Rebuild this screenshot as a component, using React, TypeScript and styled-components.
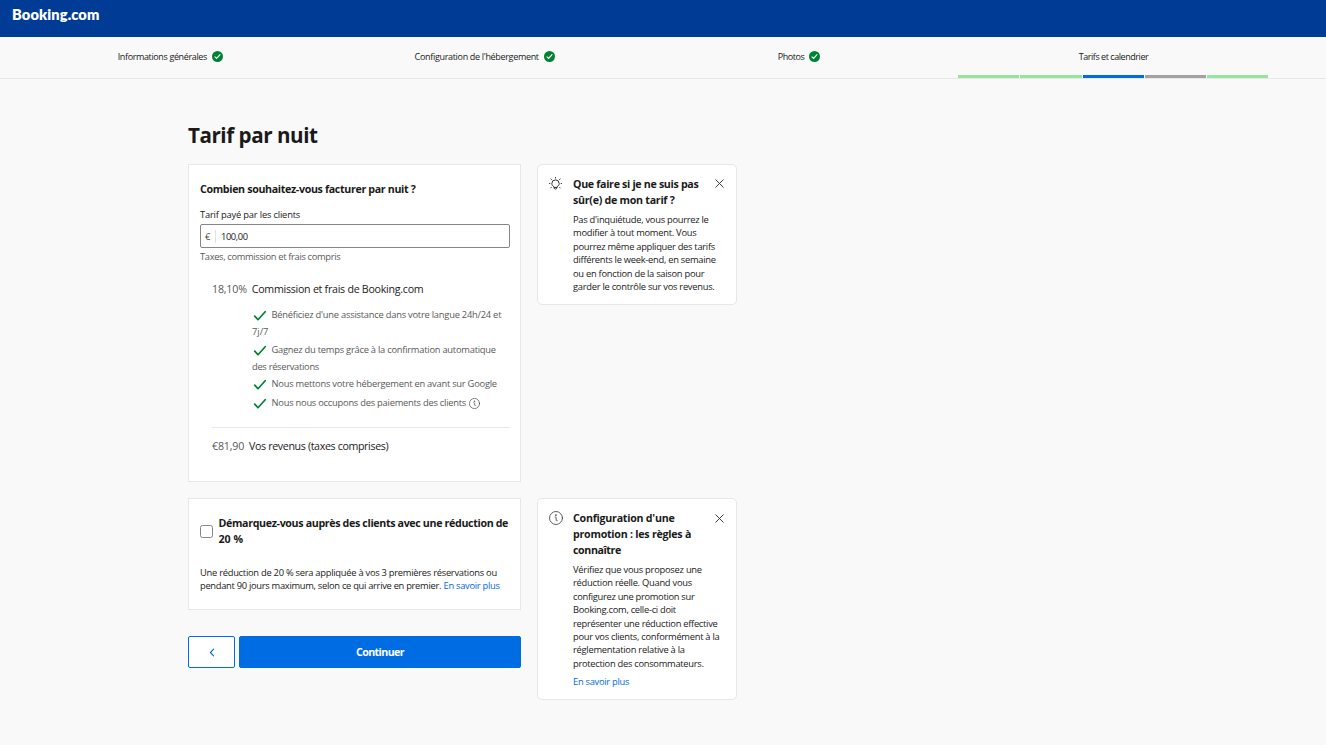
import React from "react";
import styled, { createGlobalStyle } from "styled-components";

const GlobalStyle = createGlobalStyle`
  * { box-sizing: border-box; }
  body {
    margin: 0;
    background: #f9f9f9;
    color: #1a1a1a;
    font-family: "Open Sans", "Noto Sans", sans-serif;
    font-size: 9.33px;
    line-height: 13.4px;
  }
  h1, h2, h3, p, ul { margin: 0; padding: 0; }
`;

const Page = styled.div`
  min-height: 745px;
`;

const TopBar = styled.header`
  height: 37px;
  padding: 6px 12px;
  background: #003b95;
`;

const Logo = styled.div`
  color: #fff;
  font: 800 14.6px/18px Lato, sans-serif;
  letter-spacing: 0.12px;
`;

const Steps = styled.nav`
  display: grid;
  grid-template-columns: repeat(4, 310px);
  column-gap: 4.4px;
  height: 42px;
  padding-left: 15px;
  border-bottom: 1px solid #e7e7e7;
`;

const Step = styled.div`
  display: flex;
  flex-direction: column;
  justify-content: space-between;
`;

const StepLabel = styled.div`
  display: flex;
  align-items: center;
  justify-content: center;
  gap: 5px;
  height: 39px;
  padding-left: 0.6px;
  font-size: 9px;
`;

const Progress = styled.div`
  display: grid;
  grid-template-columns: repeat(5, 1fr);
  gap: 1px;
  flex-shrink: 0;
  margin-top: -1px;
`;

const Segment = styled.span<{ $color: string }>`
  height: 3px;
  background: ${(p) => p.$color};
`;

/* One line of copy; $track tunes its letter spacing. */
const Line = styled.span<{ $track?: number }>`
  display: block;
  white-space: nowrap;
  letter-spacing: ${(p) => p.$track ?? 0}px;
`;

const Inline = styled(Line)`
  display: inline-block;
`;

const Main = styled.main`
  width: 549px;
  margin-left: 188px;
  padding-top: 42px;
`;

const Title = styled.h1`
  height: 43px;
  font-size: 20.6px;
  line-height: 28px;
  font-weight: 700;
`;

const Row = styled.section`
  display: grid;
  grid-template-columns: 333px 200px;
  column-gap: 16px;
  align-items: start;
  margin-bottom: 16px;
`;

const Card = styled.div<{ $height: number }>`
  height: ${(p) => p.$height}px;
  padding: 16px 10px 0 11px;
  background: #fff;
  border: 1px solid #e7e7e7;
`;

const Heading = styled.h2`
  font-size: 10.67px;
  line-height: 16px;
  font-weight: 700;
`;

const FieldLabel = styled.label`
  display: block;
  margin-top: 11px;
  font-weight: 500;
  color: #1a1a1a;
`;

const Field = styled.div`
  display: flex;
  align-items: center;
  height: 24px;
  margin-top: 3px;
  border: 1px solid #868686;
  border-radius: 2px;
`;

const Currency = styled.span`
  width: 15px;
  padding-left: 4px;
  border-right: 1px solid #e0e0e0;
  color: #474747;
`;

const Amount = styled.input`
  width: 200px;
  padding: 0 0 0 5px;
  border: 0;
  outline: 0;
  background: transparent;
  color: #1a1a1a;
  font: inherit;
  letter-spacing: -0.4px;
`;

const Hint = styled.p`
  margin-top: 2px;
  color: #595959;
`;

const Breakdown = styled.div`
  margin: 17px 0 0 12px;
`;

const BreakdownRow = styled.div`
  display: flex;
  gap: 5px;
  font-size: 10.67px;
  line-height: 16px;
`;

const Value = styled.span`
  color: #595959;
`;

const Benefits = styled.ul`
  display: flex;
  flex-direction: column;
  margin: 9px 0 15px 40px;
  list-style: none;
  color: #595959;
`;

const Benefit = styled.li<{ $height: number }>`
  height: ${(p) => p.$height}px;
  line-height: 16px;
`;

const BenefitLine = styled.div`
  display: flex;
  align-items: center;
  height: 18px;
  & > svg:first-child { margin: 2px 5px 0 0.5px; }
  & > svg:last-child { margin: 2px 0 0 3px; }
`;

const Divider = styled.hr`
  height: 1px;
  margin: 0 0 10px;
  border: 0;
  background: #e7e7e7;
`;

const Tip = styled.aside<{ $height: number }>`
  display: grid;
  grid-template-columns: 24px 1fr 12px;
  height: ${(p) => p.$height}px;
  padding: 11px 11px 0;
  background: #fff;
  border: 1px solid #e7e7e7;
  border-radius: 5px;
`;

const TipBody = styled.div`
  min-width: 0;
`;

const TipText = styled.p`
  margin-top: 5px;
`;

const IconSlot = styled.div<{ $drop?: number }>`
  height: 16px;
  padding-top: ${(p) => p.$drop ?? 0}px;
  svg { display: block; }
`;

const CloseButton = styled.button<{ $drop?: number }>`
  display: flex;
  height: 16px;
  padding: ${(p) => 3 + (p.$drop ?? 0)}px 0 0 2px;
  border: 0;
  background: none;
`;

const Link = styled.a`
  color: #006ce4;
  text-decoration: none;
`;

const TipLink = styled(Link)`
  display: block;
  margin-top: 5px;
`;

const CheckRow = styled.label`
  display: flex;
  align-items: center;
  gap: 5.5px;
`;

const Checkbox = styled.input`
  appearance: none;
  flex: none;
  width: 13px;
  height: 13px;
  margin: 1px 0 0;
  border: 1px solid #868686;
  border-radius: 2.5px;
  background: #fff;
`;

const PromoText = styled.p`
  margin-top: 19px;
`;

const Actions = styled.div`
  display: grid;
  grid-template-columns: 47px 1fr;
  gap: 4px;
  height: 32px;
  margin-top: 26px;
`;

const Button = styled.button<{ $primary?: boolean }>`
  display: flex;
  align-items: center;
  justify-content: center;
  padding: 0;
  border: 1px solid #006ce4;
  border-radius: 2px;
  background: ${(p) => (p.$primary ? "#006ce4" : "#fff")};
  color: ${(p) => (p.$primary ? "#fff" : "#006ce4")};
  font: 700 10.67px/16px "Open Sans", sans-serif;
`;

const DoneIcon = () => (
  <svg width="11" height="11" viewBox="0 0 11 11">
    <circle cx="5.5" cy="5.5" r="5.5" fill="#008234" />
    <path d="M3 5.9 4.6 7.4 8 3.7" fill="none" stroke="#fff" strokeWidth="1.1" strokeLinecap="round" />
  </svg>
);

const CheckIcon = () => (
  <svg width="14" height="13" viewBox="0 0 14 13" fill="none" stroke="#008234" strokeWidth="1.7" strokeLinecap="round" strokeLinejoin="round">
    <path d="M1.7 7.2 5 10.7 12.2 2.7" />
  </svg>
);

const InfoIcon = ({ size }: { size: number }) => (
  <svg width={size} height={size} viewBox="0 0 24 24" fill="none" stroke="#474747" strokeWidth="1.5" strokeLinecap="round">
    <circle cx="12" cy="12" r="11.1" />
    <path d="M10.4 10.4h1.1c.5 0 .8.3.8.8v4.4c0 .6.4 1 1 1h.7" />
    <circle cx="11.7" cy="7" r=".6" fill="#474747" />
  </svg>
);

const BulbIcon = () => (
  <svg width="13" height="15" viewBox="0 0 13 15" fill="none" stroke="#333" strokeWidth="1" strokeLinecap="round">
    <path d="M4.9 11.1V10.6C3.5 10 2.8 8.9 2.8 7.6a3.7 3.7 0 0 1 7.4 0c0 1.3-.7 2.4-2.1 3V11.1ZM5 12.2C5.3 13.5 7.7 13.5 8 12.2" />
    <path d="M6.5 2V1.5M2.4 3.5l-.6-.6M10.6 3.5l.6-.6M.9 7.5H.5M12.1 7.5h.4M2.3 11.4l-.5.5M10.7 11.4l.5.5" />
  </svg>
);

const CloseIcon = () => (
  <svg width="9" height="9" viewBox="0 0 9 9" stroke="#333" strokeWidth="0.95" strokeLinecap="round">
    <path d="M.8.8 8.2 8.2M8.2.8.8 8.2" />
  </svg>
);

const BackIcon = () => (
  <svg width="6" height="9" viewBox="0 0 6 9" fill="none" stroke="#006ce4" strokeWidth="1.1" strokeLinecap="round" strokeLinejoin="round">
    <path d="M4.6 1.2 1.4 4.5 4.6 7.8" />
  </svg>
);

type Copy = [string, number];

const steps: Copy[] = [
  ["Informations générales", -0.37],
  ["Configuration de l'hébergement", -0.32],
  ["Photos", -0.42],
];

const segments = ["#97e59c", "#97e59c", "#006ce4", "#a2a2a2", "#97e59c"];

const benefits: { height: number; lines: Copy[]; info?: boolean }[] = [
  { height: 35, lines: [["Bénéficiez d'une assistance dans votre langue 24h/24 et", -0.23], ["7j/7", 0]] },
  { height: 34, lines: [["Gagnez du temps grâce à la confirmation automatique", -0.24], ["des réservations", -0.29]] },
  { height: 19, lines: [["Nous mettons votre hébergement en avant sur Google", -0.24]] },
  { height: 18, lines: [["Nous nous occupons des paiements des clients", -0.24]], info: true },
];

const rateTitle: Copy[] = [["Que faire si je ne suis pas", -0.32], ["sûr(e) de mon tarif ?", -0.27]];
const rateText: Copy[] = [
  ["Pas d'inquiétude, vous pourrez le", -0.27],
  ["modifier à tout moment. Vous", -0.26],
  ["pourrez même appliquer des tarifs", -0.28],
  ["différents le week-end, en semaine", -0.27],
  ["ou en fonction de la saison pour", -0.27],
  ["garder le contrôle sur vos revenus.", -0.26],
];
const promoTitle: Copy[] = [["Configuration d'une", -0.25], ["promotion : les règles à", -0.25], ["connaître", -0.4]];
const promoText: Copy[] = [
  ["Vérifiez que vous proposez une", -0.24],
  ["réduction réelle. Quand vous", -0.25],
  ["configurez une promotion sur", -0.3],
  ["Booking.com, celle-ci doit", -0.28],
  ["représenter une réduction effective", -0.28],
  ["pour vos clients, conformément à la", -0.27],
  ["réglementation relative à la", -0.26],
  ["protection des consommateurs.", -0.28],
];

const Lines = ({ items }: { items: Copy[] }) => (
  <>
    {items.map(([text, track]) => (
      <Line key={text} $track={track}>{text}</Line>
    ))}
  </>
);

export default function App() {
  return (
    <Page>
      <GlobalStyle />
      <TopBar><Logo>Booking.com</Logo></TopBar>
      <Steps>
        {steps.map(([text, track]) => (
          <Step key={text}>
            <StepLabel><Line $track={track}>{text}</Line><DoneIcon /></StepLabel>
          </Step>
        ))}
        <Step>
          <StepLabel><Line $track={-0.45}>Tarifs et calendrier</Line></StepLabel>
          <Progress>{segments.map((c, i) => <Segment key={i} $color={c} />)}</Progress>
        </Step>
      </Steps>
      <Main>
        <Title><Line $track={-0.45}>Tarif par nuit</Line></Title>
        <Row>
          <Card $height={318}>
            <Heading><Line $track={-0.34}>Combien souhaitez-vous facturer par nuit ?</Line></Heading>
            <FieldLabel><Line $track={-0.18}>Tarif payé par les clients</Line></FieldLabel>
            <Field><Currency>€</Currency><Amount defaultValue="100,00" /></Field>
            <Hint><Line $track={-0.34}>Taxes, commission et frais compris</Line></Hint>
            <Breakdown>
              <BreakdownRow>
                <Value><Line $track={-0.2}>18,10%</Line></Value>
                <Line $track={-0.27}>Commission et frais de Booking.com</Line>
              </BreakdownRow>
              <Benefits>
                {benefits.map(({ height, lines, info }) => (
                  <Benefit key={height} $height={height}>
                    <BenefitLine>
                      <CheckIcon />
                      <Line $track={lines[0][1]}>{lines[0][0]}</Line>
                      {info && <InfoIcon size={11} />}
                    </BenefitLine>
                    <Lines items={lines.slice(1)} />
                  </Benefit>
                ))}
              </Benefits>
              <Divider />
              <BreakdownRow>
                <Value><Line $track={-0.2}>€81,90</Line></Value>
                <Line $track={-0.36}>Vos revenus (taxes comprises)</Line>
              </BreakdownRow>
            </Breakdown>
          </Card>
          <Tip $height={141}>
            <IconSlot><BulbIcon /></IconSlot>
            <TipBody>
              <Heading><Lines items={rateTitle} /></Heading>
              <TipText><Lines items={rateText} /></TipText>
            </TipBody>
            <CloseButton aria-label="Fermer"><CloseIcon /></CloseButton>
          </Tip>
        </Row>
        <Row>
          <div>
            <Card $height={112}>
              <CheckRow>
                <Checkbox type="checkbox" />
                <Heading>
                  <Line $track={-0.345}>Démarquez-vous auprès des clients avec une réduction de</Line>
                  <Line $track={0}>20 %</Line>
                </Heading>
              </CheckRow>
              <PromoText>
                <Line $track={-0.257}>Une réduction de 20 % sera appliquée à vos 3 premières réservations ou</Line>
                <Inline $track={-0.29}>pendant 90 jours maximum, selon ce qui arrive en premier.</Inline>{" "}
                <Link href="#"><Inline $track={-0.28}>En savoir plus</Inline></Link>
              </PromoText>
            </Card>
            <Actions>
              <Button aria-label="Retour"><BackIcon /></Button>
              <Button $primary><Line $track={-0.6}>Continuer</Line></Button>
            </Actions>
          </div>
          <Tip $height={202}>
            <IconSlot $drop={0.5}><InfoIcon size={14} /></IconSlot>
            <TipBody>
              <Heading><Lines items={promoTitle} /></Heading>
              <TipText><Lines items={promoText} /></TipText>
              <TipLink href="#"><Line $track={-0.28}>En savoir plus</Line></TipLink>
            </TipBody>
            <CloseButton $drop={1} aria-label="Fermer"><CloseIcon /></CloseButton>
          </Tip>
        </Row>
      </Main>
    </Page>
  );
}
